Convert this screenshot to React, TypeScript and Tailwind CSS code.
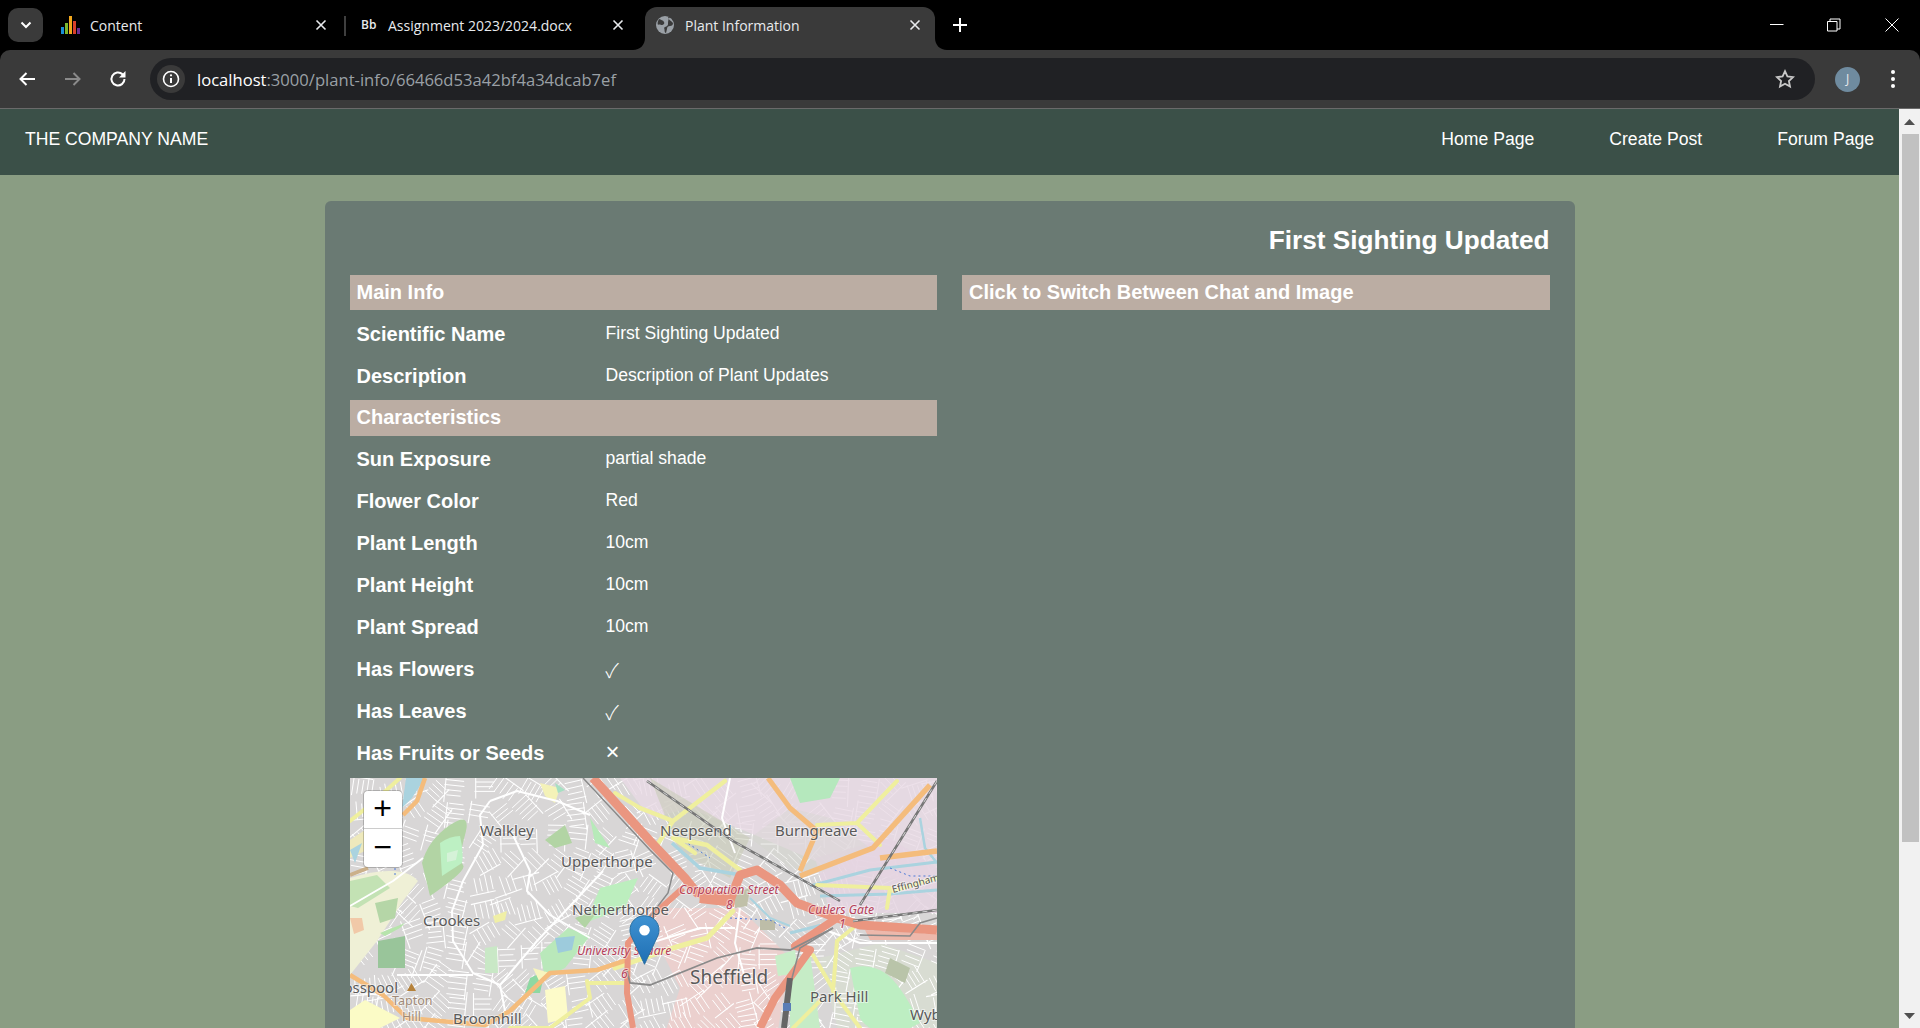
import React from "react";

const chromeFont = "font-['Open_Sans','Noto_Sans',sans-serif]";

function TabX({ className = "" }: { className?: string }) {
  return (
    <svg width="12" height="12" viewBox="0 0 12 12" className={className}>
      <path d="M1.5 1.5 10.5 10.5M10.5 1.5 1.5 10.5" stroke="#e8eaed" strokeWidth="1.6" fill="none" />
    </svg>
  );
}

function ChromeBar() {
  return (
    <div className="shrink-0">
      <div className={`h-[50px] bg-black flex items-start text-[14px] text-[#e8eaed] ${chromeFont}`}>
        <div className="ml-2 mt-2 w-[35px] h-[34px] rounded-[10px] bg-[#3a3a3a] flex items-center justify-center">
          <svg width="12" height="8" viewBox="0 0 12 8">
            <path d="M1.5 1.5 6 6 10.5 1.5" stroke="#fff" strokeWidth="2" fill="none" />
          </svg>
        </div>
        <div className="ml-[18px] w-[270px] h-[50px] flex items-center">
          <svg width="19" height="18" viewBox="0 0 19 18" className="shrink-0">
            <rect x="0" y="11" width="3" height="7" fill="#1a8fd6" />
            <rect x="4" y="7" width="3" height="11" fill="#7cb82f" />
            <rect x="8" y="0" width="3" height="18" fill="#f2a81d" />
            <rect x="12" y="5" width="3" height="13" fill="#d9402b" />
            <rect x="16" y="12" width="3" height="6" fill="#6a2c91" />
          </svg>
          <span className="ml-[10px] flex-1">Content</span>
          <TabX className="mr-[4px]" />
        </div>
        <div className="ml-[13px] mt-4 w-[2px] h-[20px] bg-[#3f3f3f]" />
        <div className="ml-[15px] w-[265px] h-[50px] flex items-center">
          <span className="w-[27px] text-[12px] font-semibold">Bb</span>
          <span className="flex-1 whitespace-nowrap">Assignment 2023/2024.docx</span>
          <TabX className="mr-[2px]" />
        </div>
        <div className="relative ml-[19px] mt-[7px] w-[290px] h-[43px] bg-[#3a3a3a] rounded-t-[12px] flex items-center pb-[7px] pl-[11px] pr-[14px]">
          <svg width="12" height="12" viewBox="0 0 12 12" className="absolute -left-[12px] bottom-0">
            <path d="M12 0V12H0C7 12 12 7 12 0Z" fill="#3a3a3a" />
          </svg>
          <svg width="12" height="12" viewBox="0 0 12 12" className="absolute -right-[12px] bottom-0">
            <path d="M0 0V12H12C5 12 0 7 0 0Z" fill="#3a3a3a" />
          </svg>
          <svg width="18" height="18" viewBox="0 0 18 18" className="shrink-0">
            <circle cx="9" cy="9" r="9" fill="#9aa0a6" />
            <path d="M3 3c2 1 4 1 5 3s-1 3-2 3-3-1-4 0c-1-2 0-4 1-6ZM12 1c1 2 1 3 3 4l2 2c0 2-1 3-3 3-2 0-3 1-3 3l-1 4c-2 0-1-4-2-5 1-2 4-1 4-4 0-2 0-5 2-7Z" fill="#3a3a3a" />
          </svg>
          <span className="ml-[11px] flex-1">Plant Information</span>
          <TabX />
        </div>
        <div className="ml-[18px] mt-[18px]">
          <svg width="14" height="14" viewBox="0 0 14 14">
            <path d="M7 0v14M0 7h14" stroke="#fff" strokeWidth="2" />
          </svg>
        </div>
        <div className="ml-auto flex items-start">
          <svg width="14" height="14" viewBox="0 0 14 14" className="mt-[17px] mr-[43px]">
            <path d="M0 7.5h13.5" stroke="#fff" strokeWidth="1" />
          </svg>
          <svg width="14" height="14" viewBox="0 0 14 14" className="mt-[18px] mr-[44px]">
            <path d="M.5 3.5h9.5v9.5h-9.5zM3 3.5v-2.5h10v10h-3" stroke="#fff" strokeWidth="1" fill="none" />
          </svg>
          <svg width="14" height="14" viewBox="0 0 14 14" className="mt-[18px] mr-[21px]">
            <path d="M.5.5 13.5 13.5M13.5.5.5 13.5" stroke="#fff" strokeWidth="1" />
          </svg>
        </div>
      </div>
      <div className="h-[59px] bg-[#3a3a3a] rounded-t-[10px] border-b border-[#6a6a6a] flex items-center">
        <div className="ml-[18px] w-[18px]">
          <svg width="18" height="16" viewBox="0 0 18 16">
            <path d="M17 8H3M8.5 2 2.500 8l6 6" stroke="#fff" strokeWidth="2" fill="none" />
          </svg>
        </div>
        <div className="ml-[28px] w-[18px]">
          <svg width="18" height="16" viewBox="0 0 18 16">
            <path d="M1 8h14M9.500 2l6 6-6 6" stroke="#8a8a8a" strokeWidth="2" fill="none" />
          </svg>
        </div>
        <div className="ml-[27px] w-[18px]">
          <svg width="18" height="18" viewBox="0 0 18 18">
            <path d="M15.500 9a6.500 6.500 0 1 1-2-4.700L15.500 6" stroke="#fff" strokeWidth="2" fill="none" />
            <path d="M16.500 1v6.500H10z" fill="#fff" />
          </svg>
        </div>
        <div className="ml-[23px] w-[1665px] h-[42px] rounded-full bg-[#202124] flex items-center pl-[7px] pr-[20px]">
          <div className="w-[28px] h-[28px] rounded-full bg-[#3a3a3a] flex items-center justify-center shrink-0">
            <svg width="18" height="18" viewBox="0 0 18 18">
              <circle cx="9" cy="9" r="7.500" stroke="#fff" strokeWidth="1.600" fill="none" />
              <path d="M9 8v5" stroke="#fff" strokeWidth="2" />
              <circle cx="9" cy="5.300" r="1.100" fill="#fff" />
            </svg>
          </div>
          <span className={`ml-[12px] pt-[2px] text-[16.6px] flex-1 ${chromeFont} text-[#9aa0a6] whitespace-nowrap`}>
            <span className="text-white">localhost</span>:3000/plant-info/66466d53a42bf4a34dcab7ef
          </span>
          <svg width="20" height="20" viewBox="0 0 20 20">
            <path d="M10 2.200l2.400 5.200 5.600.7-4.100 3.900 1.100 5.600-5-2.800-5 2.800 1.100-5.600L2 8.100l5.600-.7z" stroke="#c8c8c8" strokeWidth="1.800" fill="none" />
          </svg>
        </div>
        <div className={`ml-[20px] w-[25px] h-[25px] rounded-full bg-[#6f8b9f] text-[#e8eaed] text-[12px] flex items-center justify-center ${chromeFont}`}>J</div>
        <div className="ml-[31px] flex flex-col gap-[3px]">
          <div className="w-[4px] h-[4px] rounded-full bg-white" />
          <div className="w-[4px] h-[4px] rounded-full bg-white" />
          <div className="w-[4px] h-[4px] rounded-full bg-white" />
        </div>
      </div>
    </div>
  );
}

function rng(seed: number) {
  let s = seed;
  return () => {
    s = (s * 9301 + 49297) % 233280;
    return s / 233280;
  };
}

// A dense residential street texture: each cell holds short parallel streets.
function buildStreets() {
  const r = rng(77);
  const cell = 24;
  let thin = "";
  let link = "";
  for (let gy = 0; gy < 11; gy++) {
    for (let gx = 0; gx < 25; gx++) {
      const cx = gx * cell + 12 + (r() - 0.5) * 8;
      const cy = gy * cell + 12 + (r() - 0.5) * 8;
      const base = Math.sin(gx * 0.55 + 1) * Math.cos(gy * 0.7) * 70 + (gx % 5 === 0 ? 40 : 10);
      const a = (base * Math.PI) / 180;
      const dx = Math.cos(a);
      const dy = Math.sin(a);
      const n = 3 + Math.floor(r() * 3);
      const sp = 4.5 + r() * 1.5;
      for (let i = 0; i < n; i++) {
        const off = (i - n / 2) * sp;
        const l = 13 + r() * 8;
        const mx = cx - dy * off;
        const my = cy + dx * off;
        thin += `M${(mx - (dx * l) / 2).toFixed(1)} ${(my - (dy * l) / 2).toFixed(1)}L${(mx + (dx * l) / 2).toFixed(1)} ${(my + (dy * l) / 2).toFixed(1)}`;
      }
      const l2 = 22 + r() * 8;
      const side = (r() > 0.5 ? 1 : -1) * 9;
      const px = cx + dx * side;
      const py = cy + dy * side;
      link += `M${(px + (dy * l2) / 2).toFixed(1)} ${(py - (dx * l2) / 2).toFixed(1)}L${(px - (dy * l2) / 2).toFixed(1)} ${(py + (dx * l2) / 2).toFixed(1)}`;
    }
  }
  return { thin, link };
}
const streetPaths = buildStreets();

function Lbl(props: { x: number; y: number; s?: number; c?: string; i?: boolean; children: React.ReactNode; r?: number }) {
  const { x, y, s = 15, c = "#5a5a5a", i, children, r } = props;
  return (
    <text
      x={x}
      y={y}
      fontSize={s}
      fill={c}
      fontStyle={i ? "italic" : "normal"}
      fontFamily="'Noto Sans', sans-serif"
      stroke="#ffffff"
      strokeOpacity={0.5}
      strokeWidth={2}
      paintOrder="stroke"
      transform={r ? `rotate(${r} ${x} ${y})` : undefined}
    >
      {children}
    </text>
  );
}

function MapArt() {
  const red = "#b5405a";
  return (
    <svg viewBox="0 0 587 300" width="587" height="300" className="absolute inset-0 block">
      <defs>
        <filter id="soft" x="-2%" y="-2%" width="104%" height="104%">
          <feGaussianBlur stdDeviation="0.6" />
        </filter>
      </defs>
      <rect width="587" height="300" fill="#d8d6d6" />
      <g filter="url(#soft)">
        {/* built-up land use, under the streets */}
        <path d="M400 60 440 30 480 40 520 70 470 95 440 90Z" fill="#d6d6d2" />
        <path d="M290 130 390 130 440 180 420 300H300L330 210Z" fill="#ebd0ce" />
        <path d="M470 180 530 165 587 185V300H500Z" fill="#d8dcd2" />

        <path d={streetPaths.thin} stroke="#ffffff" strokeWidth="1" fill="none" />
        <path d={streetPaths.link} stroke="#ffffff" strokeWidth="1.100" fill="none" />

        {/* industrial land, mostly above the fine streets */}
        <path d="M270 0H587V110L470 85 400 55 340 30 300 40Z" fill="#e8d9e5" opacity=".8" />
        <path d="M465 80 540 60 587 90V135H480Z" fill="#e5d5e2" opacity=".85" />
        <path d="M300 0 400 60 380 100 330 75Z" fill="#c9cdb9" opacity=".6" />
        <path d="M400 60 440 30 480 40 520 70 470 95 440 90Z" fill="#d6d6d2" opacity=".4" />

        {/* parks, fields and water above the streets */}
        <path d="M440 0H490L480 20 450 25Z" fill="#b5e8bd" />
        <path d="M500 190Q520 185 535 195T570 245L540 260Q515 250 510 240Z" fill="#bdeec2" />
        <path d="M440 185 460 175 470 250 440 280Z" fill="#c6ecc6" />
        <path d="M515 152 587 156V162L520 162Z" fill="#edb8ab" />
        <path d="M540 180 560 190 555 205 535 195Z" fill="#b9c4a9" />
        <path d="M0 100Q25 92 43 93T68 103L53 123 27 163 0 197Z" fill="#eff0d6" />
        <path d="M0 103 27 97 40 110 8 130 0 128Z" fill="#c3e2b4" />
        <path d="M28 163 55 158 55 190 28 190Z" fill="#99c59a" />
        <path d="M25 125 48 120 45 140 30 145Z" fill="#b5d6a7" />
        <path d="M30 155 55 145 50 150 35 158Z" fill="#b7e4ac" />
        <path d="M0 140 12 140 14 152 4 156Z" fill="#f1c9a8" />
        <path d="M72 85Q78 62 100 47T115 57 113 87 80 118Z" fill="#b2d4a4" />
        <path d="M90 65Q100 58 110 58 114 75 112 85L92 98Z" fill="#bdf0c3" />
        <path d="M97 75 108 72 106 82 97 84Z" fill="#d5f2d8" />
        <path d="M195 62 215 47 222 65 205 70Z" fill="#b2d4a4" />
        <path d="M240 40 260 70 245 65Z" fill="#b7eab9" />
        <path d="M250 110 288 100 275 130 235 145Z" fill="#bceebe" />
        <path d="M225 140 250 130 235 150Z" fill="#b2d4a4" />
        <path d="M190 175 218 150 240 158 215 190 195 200Z" fill="#b9e8ba" />
        <path d="M205 160 225 158 222 172 208 175Z" fill="#9dcbdc" />
        <path d="M135 170 147 168 148 195 135 195Z" fill="#c9e8c6" />
        <path d="M180 200 195 193 190 215 175 215Z" fill="#8ed8a2" />
        <path d="M195 212 215 208 218 240 198 245Z" fill="#fdfbc9" />
        <path d="M183 190 200 195 190 205Z" fill="#f7f5be" />
        <path d="M0 232 15 222 50 240 30 250H0Z" fill="#fbfbc6" />
        <path d="M190 5 210 10 205 25 195 18Z" fill="#f4f2b8" />
        <path d="M205 5 215 12 208 15Z" fill="#a6e0c2" />
        <path d="M143 138 157 133 155 142 145 145Z" fill="#f0efa6" />
        <path d="M56 0 75 0 62 20 52 30Z" fill="#aad3df" />
        <path d="M0 62 15 52 17 72 0 80Z" fill="#eee9bc" />
        <path d="M0 72 12 65 5 85Z" fill="#aad3df" />
        <path d="M410 142 425 142 425 152 410 152Z" fill="#bdbda8" />
        <path d="M385 115 400 110 397 128 385 130Z" fill="#c0c0a8" />
        <path d="M425 178 445 172 448 195 428 198Z" fill="#c8eec8" />

        {/* rivers */}
        <path d="M322 65 350 90 385 96 395 100" stroke="#aad3df" strokeWidth="3.500" fill="none" />
        <path d="M460 108 520 92 587 84" stroke="#aad3df" strokeWidth="3" fill="none" />
        <path d="M470 118 540 116 587 112" stroke="#aad3df" strokeWidth="3" fill="none" />
        <path d="M400 120 420 140 440 148" stroke="#aad3df" strokeWidth="2" fill="none" />
        <path d="M440 155 480 145" stroke="#aad3df" strokeWidth="3" fill="none" />
        <path d="M570 40 575 70 587 85" stroke="#aad3df" strokeWidth="2.500" fill="none" />
        <path d="M540 90 560 98 587 98" stroke="#4b78d6" strokeWidth="1" strokeDasharray="2 3" fill="none" />
        <path d="M380 140 420 142 435 150M330 60 360 80" stroke="#4b78d6" strokeWidth="1" strokeDasharray="2 3" fill="none" />
        <path d="M45 80 45 100" stroke="#4b78d6" strokeWidth="1" strokeDasharray="2 3" fill="none" />

        {/* larger white roads */}
        <path
          d="M140 23 130 37 133 67 113 103 102 133 103 163 123 195 150 207 155 233M140 23 167 13 207 23 240 37M163 57 180 93 177 113 200 137 240 160M150 207 187 163 253 93M47 197H123M0 128 43 103 73 80M380 0 372 40 385 75M390 130 385 165 395 200M300 165 350 150 385 150M470 150 510 165 587 165"
          stroke="#fff"
          strokeWidth="2"
          fill="none"
          strokeLinejoin="round"
        />

        {/* tertiary yellow */}
        <g stroke="#efef9e" fill="none" strokeLinejoin="round" strokeLinecap="round">
          <path d="M290 30 323 43 375 3M323 60 357 67 390 92M307 67 323 43M323 60 345 75" strokeWidth="4.500" />
          <path d="M265 190 323 170 357 160 383 133" strokeWidth="5" />
          <path d="M467 47 507 45 530 67M507 45 547 3" strokeWidth="4" />
          <path d="M467 107 540 110 537 130M543 113 587 100" strokeWidth="4" />
          <path d="M483 213 487 163 503 150M463 177 490 223 510 250M443 250 470 223" strokeWidth="4" />
          <path d="M237 203 240 220 200 250M240 205 277 205M160 250 200 250" strokeWidth="4" />
          <path d="M0 43 20 27 50 0M265 15 290 30" strokeWidth="4" />
        </g>

        {/* secondary orange */}
        <g stroke="#f4bc7c" fill="none" strokeLinejoin="round">
          <path d="M0 197 33 217 57 240 135 247 160 233 200 195 247 192 277 182" strokeWidth="4.500" />
          <path d="M75 0 67 23 53 37" strokeWidth="4.500" />
          <path d="M418 0 440 30 467 53 450 93" strokeWidth="5" />
          <path d="M580 7 523 70 450 98M530 80 587 73" strokeWidth="5.500" />
          <path d="M0 97 18 90" stroke="#cbb08a" strokeWidth="4" />
        </g>

        {/* trunk */}
        <g stroke="#ea9680" fill="none" strokeLinejoin="round">
          <path d="M243 0 300 63 335 100 347 115 380 122 390 97 407 92 430 107 447 125 487 140 510 147 587 152" strokeWidth="9" />
          <path d="M350 118 385 122" strokeWidth="14" />
          <path d="M333 110 303 137 278 165 277 215 283 250" strokeWidth="6" />
          <path d="M487 140 445 168 460 172 425 220 410 250" strokeWidth="8" />
        </g>

        {/* rail */}
        <g fill="none">
          <path d="M297 3 383 63 490 123M587 3 510 127M503 143 587 132" stroke="#777" strokeWidth="2.500" />
          <path d="M297 3 383 63 490 123M587 3 510 127M503 143 587 132" stroke="#e8e8e8" strokeWidth=".8" strokeDasharray="5 5" />
          <path d="M483 150 450 170 442 200" stroke="#8a8a8a" strokeWidth="1.500" />
          <path d="M440 200 434 250" stroke="#666" strokeWidth="6" />
          <path d="M233 0 300 72 323 95 318 115 295 145" stroke="#8a8a8a" strokeWidth="1.500" />
          <path d="M277 193 280 205 300 207 367 180 407 170 440 172 483 150" stroke="#8a8a8a" strokeWidth="1.800" />
          <path d="M510 157 560 158 570 145 587 140" stroke="#8a8a8a" strokeWidth="1.500" />
          <rect x="433" y="225" width="8" height="8" fill="#5a7bb5" />
        </g>
      </g>

      <Lbl x={130} y={58}>Walkley</Lbl>
      <Lbl x={211} y={89}>Upperthorpe</Lbl>
      <Lbl x={222} y={137}>Netherthorpe</Lbl>
      <Lbl x={73} y={148}>Crookes</Lbl>
      <Lbl x={-22} y={215}>Crosspool</Lbl>
      <Lbl x={42} y={227} s={12.500} c="#a08a78">Tapton</Lbl>
      <Lbl x={52} y={243} s={12.500} c="#a08a78">Hill</Lbl>
      <path d="M57 213h9l-4.500-8z" fill="#b5813a" />
      <Lbl x={103} y={246}>Broomhill</Lbl>
      <Lbl x={310} y={58}>Neepsend</Lbl>
      <Lbl x={425} y={58}>Burngreave</Lbl>
      <Lbl x={340} y={206} s={19}>Sheffield</Lbl>
      <Lbl x={460} y={224}>Park Hill</Lbl>
      <Lbl x={560} y={242}>Wyb</Lbl>
      <Lbl x={227} y={177} s={12.200} c={red} i>University Square</Lbl>
      <Lbl x={271} y={200} s={12.200} c={red} i>6</Lbl>
      <Lbl x={329} y={116} s={12.200} c={red} i>Corporation Street</Lbl>
      <Lbl x={376} y={131} s={12.200} c={red} i>8</Lbl>
      <Lbl x={458} y={136} s={12.200} c={red} i>Cutlers Gate</Lbl>
      <Lbl x={489} y={150} s={12.200} c={red} i>1</Lbl>
      <Lbl x={543} y={115} s={10} c="#555" r={-15}>Effingham</Lbl>
    </svg>
  );
}

function Marker() {
  return (
    <svg width="31" height="50" viewBox="0 0 25 41" className="absolute left-[279px] top-[137px]">
      <defs>
        <linearGradient id="pin" x1="0" y1="0" x2="0" y2="1">
          <stop offset="0" stopColor="#3f92d2" />
          <stop offset="1" stopColor="#1f6fb3" />
        </linearGradient>
      </defs>
      <path d="M12.500.6C5.800.6.6 5.800.6 12.500c0 2.300.7 4.400 1.800 6.300L12.500 40.400 22.600 18.800c1.100-1.900 1.800-4 1.800-6.300C24.400 5.800 19.200.6 12.500.6Z" fill="url(#pin)" stroke="#2a6f9f" strokeWidth=".8" />
      <circle cx="12.500" cy="12.500" r="4.300" fill="#fff" />
    </svg>
  );
}

const Row = ({ label, value }: { label: string; value: React.ReactNode }) => (
  <div className="grid grid-cols-[249px_1fr] h-[42px] items-center px-[7px] text-white">
    <div className="text-[20px] font-bold leading-none">{label}</div>
    <div className="text-[17.6px] leading-none">{value}</div>
  </div>
);

const Check = () => (
  <span className="font-['Noto_Sans_CJK_JP','DejaVu_Sans',sans-serif] font-light text-[20px] leading-none block pt-[1px]">✓</span>
);

const Cross = () => (
  <span className="font-['Liberation_Sans',sans-serif] text-[24px] leading-none block -mt-[2px]">×</span>
);

const Bar = ({ children, h }: { children: string; h: string }) => (
  <div className={`${h} bg-[#bbada3] text-white font-bold text-[20px] flex items-center px-[7px] pb-[2px]`}>{children}</div>
);

export default function App() {
  return (
    <div className="h-screen flex flex-col overflow-hidden bg-black font-['Liberation_Sans',Arial,sans-serif]">
      <ChromeBar />
      <div className="flex-1 flex min-h-0">
        <div className="flex-1 min-w-0 bg-[#8a9d83] overflow-hidden flex flex-col">
          <header className="h-[66px] shrink-0 bg-[#3b5048] flex items-center justify-between px-[25px] pb-[5px] text-white text-[17.6px]">
            <div>THE COMPANY NAME</div>
            <nav className="flex gap-[75px]">
              <span>Home Page</span>
              <span>Create Post</span>
              <span>Forum Page</span>
            </nav>
          </header>
          <main className="mt-[26px] mx-auto w-[1250px] bg-[#6a7a73] rounded-t-[6px] pt-[24px] px-[25px] shrink-0">
            <h1 className="h-[30px] mb-[20px] text-right text-white font-bold text-[26.2px] leading-[30px]">First Sighting Updated</h1>
            <div className="grid grid-cols-2 gap-[25px]">
              <section>
                <Bar h="h-[35px]">Main Info</Bar>
                <div className="pt-[3px] pb-[3px]">
                  <Row label="Scientific Name" value="First Sighting Updated" />
                  <Row label="Description" value="Description of Plant Updates" />
                </div>
                <Bar h="h-[36px]">Characteristics</Bar>
                <div className="pt-[2px] pb-[4px]">
                  <Row label="Sun Exposure" value="partial shade" />
                  <Row label="Flower Color" value="Red" />
                  <Row label="Plant Length" value="10cm" />
                  <Row label="Plant Height" value="10cm" />
                  <Row label="Plant Spread" value="10cm" />
                  <Row label="Has Flowers" value={<Check />} />
                  <Row label="Has Leaves" value={<Check />} />
                  <Row label="Has Fruits or Seeds" value={<Cross />} />
                </div>
                <div className="relative h-[300px] overflow-hidden">
                  <MapArt />
                  <Marker />
                  <div className="absolute left-[14px] top-[13px] w-[38px] h-[76px] bg-white rounded-[4px] ring-1 ring-black/20 flex flex-col text-black font-['Liberation_Mono',monospace] text-[32px] leading-none">
                    <div className="h-[38px] flex items-center justify-center border-b border-[#ccc] pt-[3px]">+</div>
                    <div className="h-[38px] flex items-center justify-center pt-[4px]">−</div>
                  </div>
                </div>
              </section>
              <section>
                <Bar h="h-[35px]">Click to Switch Between Chat and Image</Bar>
              </section>
            </div>
          </main>
        </div>
        <div className="w-[21px] shrink-0 bg-[#f1f1f1] flex flex-col items-center relative">
          <div className="h-[25px] flex items-center justify-center">
            <svg width="11" height="6" viewBox="0 0 11 6"><path d="M5.500 0 11 6H0Z" fill="#505050" /></svg>
          </div>
          <div className="w-[17px] h-[708px] bg-[#c1c1c1] ml-[1px]" />
          <div className="mt-auto h-[25px] flex items-center justify-center">
            <svg width="11" height="6" viewBox="0 0 11 6"><path d="M0 0H11L5.500 6Z" fill="#505050" /></svg>
          </div>
        </div>
      </div>
    </div>
  );
}
